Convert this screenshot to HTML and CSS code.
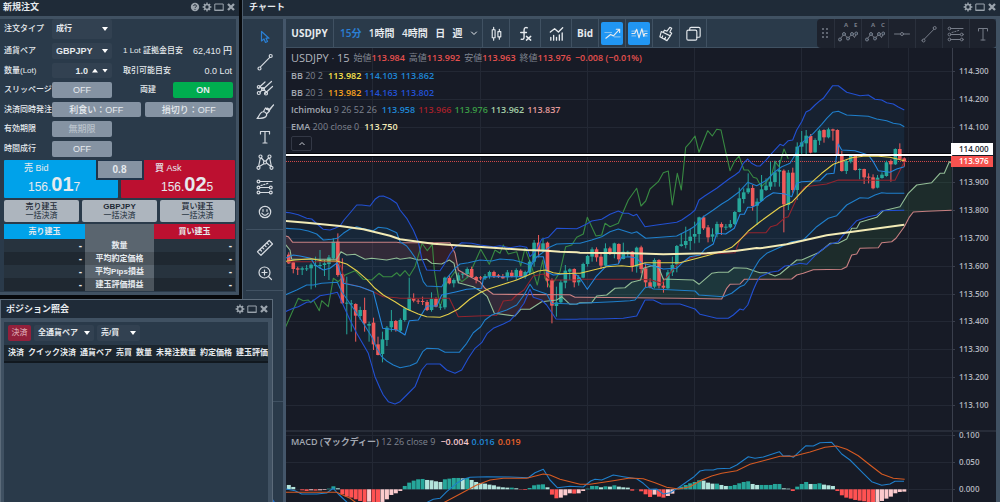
FILE: index.html
```html
<!DOCTYPE html>
<html lang="ja">
<head>
<meta charset="utf-8">
<title>USDJPY チャート</title>
<link rel="stylesheet" href="styles.css">
</head>
<body>
<svg class="sprite" aria-hidden="true">
  <symbol id="i-help" viewBox="0 0 10 10"><circle cx="5" cy="5" r="4.2" fill="currentColor"/><path d="M3.6 4a1.4 1.3 0 1 1 2 1.2q-.6.3-.6.9M5 7.1v.9" fill="none" stroke="#1f2a36" stroke-width="1"/></symbol>
  <symbol id="i-gear" viewBox="0 0 10 10"><circle cx="5" cy="5" r="2.5" fill="none" stroke="currentColor" stroke-width="1.7"/><path d="M5 .6v1.6M5 7.8v1.6M.6 5h1.6M7.8 5h1.6M1.9 1.9l1.1 1.1M7 7l1.1 1.1M8.1 1.9L7 3M3 7L1.900 8.100" stroke="currentColor" stroke-width="1.4"/></symbol>
  <symbol id="i-max" viewBox="0 0 10 10"><path d="M.8 2h8.400v6.300H.8z" fill="none" stroke="currentColor" stroke-width="1"/><path d="M.5 8.300h9" stroke="currentColor" stroke-width="1.200"/></symbol>
  <symbol id="i-close" viewBox="0 0 10 10"><path d="M2 2l6 6M8 2L2 8" stroke="currentColor" stroke-width="2.300"/></symbol>
  <symbol id="i-trend" viewBox="0 0 20 20"><path d="M5.200 15.200L15 5.200M3 16.500a1.500 1.500 0 1 0 3 0a1.500 1.500 0 1 0-3 0M14.200 4a1.500 1.500 0 1 0 3 0a1.500 1.500 0 1 0-3 0"/></symbol>
  <symbol id="i-fib" viewBox="0 0 20 20"><path d="M5 4.500h12M5 10.500h9M5 15.500h9"/><path d="M6 8.500l8-2.500" stroke-dasharray="1.300 1.600"/><circle cx="3.500" cy="4.500" r="1.400"/><circle cx="3.500" cy="10.500" r="1.400"/><circle cx="15.800" cy="10.500" r="1.400"/><circle cx="3.500" cy="15.500" r="1.400"/><circle cx="15.800" cy="15.500" r="1.400"/></symbol>
  <symbol id="i-text" viewBox="0 0 20 20"><path d="M5.500 7V4.500h9V7M10 4.500v11.500M8 16h4"/></symbol>
  <symbol id="i-wave" viewBox="0 0 20 20"><path d="M2.500 14.500L6 10l4 4.500L14 10l2.500 3.500L18.500 9"/><g class="knot"><circle cx="2" cy="15.500" r="1.500"/><circle cx="6" cy="10" r="1.500"/><circle cx="10" cy="14.500" r="1.500"/><circle cx="14" cy="10" r="1.500"/><circle cx="18.300" cy="9.500" r="1.500"/></g></symbol>
</svg>

<main class="desktop">
  <section class="window window-chart">
    <header class="titlebar">
      <h2>チャート</h2>
      <div class="winbtns">
        <button aria-label="設定"><svg><use href="#i-gear"/></svg></button>
        <button aria-label="最大化"><svg><use href="#i-max"/></svg></button>
        <button aria-label="閉じる"><svg><use href="#i-close"/></svg></button>
      </div>
    </header>
    <div class="chart-body">
      <nav class="tools" aria-label="描画ツール">
        <div class="tool-group">
          <button class="active" aria-label="カーソル"><svg viewBox="0 0 20 20"><path d="M6.500 4.500v9.500l2.500-2 1.500 3.500 2-1-1.500-3.300h3z"/></svg></button>
          <button aria-label="トレンドライン"><svg viewBox="0 0 20 20"><use href="#i-trend"/></svg></button>
          <button aria-label="ピッチフォーク"><svg viewBox="0 0 20 20"><path d="M5 15L16.500 4.500M4 10.500L10 5M10 16.500L17.500 9.500M5 9.500l7 6"/><circle cx="3.800" cy="16" r="1.500"/><circle cx="3.800" cy="10" r="1.500"/><circle cx="8" cy="12" r="1.500"/><circle cx="11" cy="16.500" r="1.500"/></svg></button>
          <button aria-label="ブラシ"><svg viewBox="0 0 20 20"><path d="M2 16.500c2-1 2-5 5-6.500 3-1 6 2 4 4.500-2 2-5 2-9 2zM8.500 9.500L10.500 6l4 3-3 3M11.500 7.500c0-2.500 1.500-1 3 0l4-4.500M14 9l4.500-6"/></svg></button>
          <button aria-label="テキスト"><svg viewBox="0 0 20 20"><use href="#i-text"/></svg></button>
          <button aria-label="パターン"><svg viewBox="0 0 20 20"><path d="M3.500 15L5.500 5l4.500 5 4.500-5 2 10-5.500-4.500z"/><g class="knot"><circle cx="3.500" cy="15.800" r="1.500"/><circle cx="5.500" cy="4.500" r="1.500"/><circle cx="10" cy="10.500" r="1.500"/><circle cx="14.500" cy="4.500" r="1.500"/><circle cx="16.500" cy="15.800" r="1.500"/></g></svg></button>
          <button aria-label="フィボナッチ"><svg viewBox="0 0 20 20"><use href="#i-fib"/></svg></button>
          <button aria-label="アイコン"><svg viewBox="0 0 20 20"><circle cx="10" cy="10" r="5.700"/><path d="M6.800 11.200q3.200 4.300 6.400 0M8 7.500v1.800M12 7.500v1.800"/></svg></button>
        </div>
        <div class="tool-group">
          <button aria-label="定規"><svg viewBox="0 0 20 20"><path d="M2.500 13.800L14.200 2.500l3.300 3.500L6 17.300zM5 11.500l1.500 1.500M7.300 9.300l1.500 1.500M9.600 7.100l1.500 1.500M11.900 4.900l1.500 1.500"/></svg></button>
          <button aria-label="ズーム"><svg viewBox="0 0 20 20"><circle cx="9.500" cy="9.500" r="5.500"/><path d="M9.500 7v5M7 9.500h5M13.500 13.500l3 3"/></svg></button>
        </div>
        <div class="tool-group tool-space"></div>
        <div class="tool-dock"><button class="fav" aria-label="お気に入り"><span></span></button></div>
      </nav>

      <div class="chart-main">
        <div class="topbar">
          <button class="symbol">USDJPY</button>
          <div class="intervals">
            <button class="active">15分</button><button>1時間</button><button>4時間</button><button>日</button><button>週</button>
            <button aria-label="時間足メニュー"><svg class="chev" viewBox="0 0 8 8"><path d="M1.500 3L4 5.500 6.500 3"/></svg></button>
          </div>
          <button class="cell" aria-label="ローソク足"><svg viewBox="0 0 20 20"><path d="M5.500 6h3v8.500h-3zM7 3.500V6M7 14.500V17M11.500 8h3v5.500h-3zM13 5.500V8M13 13.500v2.500"/></svg></button>
          <button class="cell wide" aria-label="インジケーター"><svg viewBox="0 0 20 20"><path d="M12 4c-2-1-3.500 0-3.500 2.500V14c0 2-1.500 2.500-3 2M5 9h6M11 13l4.500 4M15.500 13L11 17" stroke-width="1.500"/></svg></button>
          <button class="cell wide" aria-label="テンプレート"><svg viewBox="0 0 20 20"><path d="M3.500 8.500L8 5l4 3.500L16.500 4M4 14v3M7 12v5M10 14v3M13 11.500V17M16 9.500V17" stroke-width="1.400"/></svg></button>
          <button class="cell">Bid</button>
          <span class="cell"><button class="toggle" aria-label="注文ライン"><svg viewBox="0 0 20 20"><path d="M3 15l5-4 3 1.500L17 6M14 5.500h3.500V9"/><path d="M2 9h7M12 13.500h6" opacity=".5"/></svg></button></span>
          <span class="cell"><button class="toggle" aria-label="約定ライン"><svg viewBox="0 0 20 20"><path d="M2 10h3l2-4.500 2.500 9L12.500 5l2 8 1.200-3H18"/><path d="M2 7.500h4M14 7.500h4M2 12.500h4M15 12.500h3" opacity=".5"/></svg></button></span>
          <button class="cell" aria-label="消去"><svg viewBox="0 0 20 20"><path d="M4.500 8l9.500 4.500-3.500 5L3 13.500zM6.500 8.800L8 6.500l2.500 1 3-4 2 1-2 4 2 1.200-1.500 2.500M6 12.500l-.8 2M9 14l-.8 2"/></svg></button>
          <button class="cell" aria-label="レイアウト"><svg viewBox="0 0 20 20"><rect x="3" y="6.500" width="10.500" height="10.500" rx="1.500"/><path d="M6 6.500v-1.500Q6 3.500 7.500 3.500h8Q17 3.500 17 5v7.500q0 1.500-1.500 1.500h-2"/></svg></button>
          <div class="floatbar">
            <span class="grip"></span>
            <button aria-label="エリオット波動"><svg viewBox="0 0 20 20"><use href="#i-wave"/></svg><i>A</i><i>E</i></button>
            <button aria-label="ABC波動"><svg viewBox="0 0 20 20"><use href="#i-wave"/></svg><i>A</i><i>C</i></button>
            <button aria-label="水平線"><svg viewBox="0 0 20 20"><path d="M2.500 10H8M12 10h5.500"/><circle cx="10" cy="10" r="1.500"/></svg></button>
            <button aria-label="ライン"><svg viewBox="0 0 20 20"><use href="#i-trend"/></svg></button>
            <button aria-label="リトレースメント"><svg viewBox="0 0 20 20"><use href="#i-fib"/></svg></button>
            <button aria-label="文字"><svg viewBox="0 0 20 20"><use href="#i-text"/></svg></button>
          </div>
        </div>

        <div class="pane pane-price">
          <svg id="price" viewBox="286 48 710 382" preserveAspectRatio="xMaxYMin slice"></svg>
          <div class="legend">
            <p class="ohlc"><b class="sym">USDJPY <small>·</small> 15</b><span>始値<b class="down">113.984</b></span><span>高値<b class="down">113.992</b></span><span>安値<b class="down">113.963</b></span><span>終値<b class="down">113.976</b></span><b class="down">−0.008 (−0.01%)</b></p>
            <p><span><b>BB</b> 20 2</span><b class="yellow">113.982</b><b class="blue">114.103</b><b class="blue">113.862</b></p>
            <p><span><b>BB</b> 20 3</span><b class="orange">113.982</b><b class="navy">114.163</b><b class="navy">113.802</b></p>
            <p><span><b>Ichimoku</b> 9 26 52 26</span><b class="blue">113.958</b><b class="wine">113.966</b><b class="green">113.976</b><b class="mint">113.962</b><b class="pink">113.837</b></p>
            <p><span><b>EMA</b> 200 close 0</span><b class="cream">113.750</b></p>
            <button class="collapse" aria-label="折りたたむ"><svg class="chev" viewBox="0 0 8 8"><path d="M1.500 5L4 2.500 6.500 5"/></svg></button>
          </div>
        </div>
        <div class="pane pane-macd">
          <svg id="macd" viewBox="286 430 710 72" preserveAspectRatio="xMaxYMin slice"></svg>
          <div class="legend">
            <p><span><b>MACD (マックディー)</b> 12 26 close 9</span><b class="rose">−0.004</b><b class="blue">0.016</b><b class="rust">0.019</b></p>
          </div>
        </div>
      </div>
    </div>
  </section>

  <section class="window window-order">
    <header class="titlebar">
      <h2>新規注文</h2>
      <div class="winbtns">
        <button aria-label="ヘルプ"><svg><use href="#i-help"/></svg></button>
        <button aria-label="設定"><svg><use href="#i-gear"/></svg></button>
        <button aria-label="最大化"><svg><use href="#i-max"/></svg></button>
        <button aria-label="閉じる"><svg><use href="#i-close"/></svg></button>
      </div>
    </header>
    <form class="order">
      <div class="fields">
        <label for="otype">注文タイプ</label>
        <span class="select"><select id="otype"><option>成行</option></select></span>
        <span class="rest"></span>

        <label for="pair">通貨ペア</label>
        <span class="select latin"><select id="pair"><option>GBPJPY</option></select></span>
        <span class="rest"><span>1 Lot 証拠金目安</span><span class="num">62,410 円</span></span>

        <label for="lot">数量(Lot)</label>
        <span class="stepper latin"><input id="lot" type="text" value="1.0"><button type="button" class="up" aria-label="増やす"></button><button type="button" class="dn" aria-label="減らす"></button></span>
        <span class="rest"><span>取引可能目安</span><span class="num">0.0 Lot</span></span>

        <label for="slip">スリッページ</label>
        <button type="button" id="slip" class="btn">OFF</button>
        <span class="rest hedge"><label for="hedge">両建</label><button type="button" id="hedge" class="btn on">ON</button></span>

        <label for="tp">決済同時発注</label>
        <span class="pair-btns"><button type="button" id="tp" class="btn">利食い：OFF</button><button type="button" class="btn">損切り：OFF</button></span>

        <label for="exp">有効期限</label>
        <button type="button" id="exp" class="btn" disabled>無期限</button>
        <span class="rest"></span>

        <label for="timed">時間成行</label>
        <button type="button" id="timed" class="btn">OFF</button>
        <span class="rest"></span>
      </div>

      <div class="quotes">
        <button type="button" class="quote bid"><span class="side">売 Bid</span><span class="px">156.<b>01</b>7</span></button>
        <button type="button" class="quote ask"><span class="side">買 Ask</span><span class="px">156.<b>02</b>5</span></button>
        <span class="spread">0.8</span>
      </div>

      <div class="closers">
        <button type="button"><b>売り建玉</b>一括決済</button>
        <button type="button"><b class="latin">GBPJPY</b>一括決済</button>
        <button type="button"><b>買い建玉</b>一括決済</button>
      </div>

      <table class="summary">
        <thead><tr><th class="sell">売り建玉</th><th></th><th class="buy">買い建玉</th></tr></thead>
        <tbody>
          <tr><td>-</td><th>数量</th><td>-</td></tr>
          <tr><td>-</td><th>平均約定価格</th><td>-</td></tr>
          <tr><td>-</td><th>平均Pips損益</th><td>-</td></tr>
          <tr><td>-</td><th>建玉評価損益</th><td>-</td></tr>
        </tbody>
      </table>
    </form>
  </section>

  <section class="window window-positions">
    <header class="titlebar">
      <h2>ポジション照会</h2>
      <div class="winbtns">
        <button aria-label="設定"><svg><use href="#i-gear"/></svg></button>
        <button aria-label="最大化"><svg><use href="#i-max"/></svg></button>
        <button aria-label="閉じる"><svg><use href="#i-close"/></svg></button>
      </div>
    </header>
    <div class="positions">
      <div class="filters">
        <button class="settle">決済</button>
        <span class="select f-pair"><select aria-label="通貨ペア"><option>全通貨ペア</option></select></span>
        <span class="select f-side"><select aria-label="売買"><option>売/買</option></select></span>
      </div>
      <div class="table-clip">
        <table>
          <thead><tr><th>決済</th><th>クイック決済</th><th>通貨ペア</th><th>売買</th><th>数量</th><th>未発注数量</th><th>約定価格</th><th>建玉評価</th></tr></thead>
        </table>
      </div>
    </div>
  </section>
</main>
<script src="chart.js"></script>
</body>
</html>
```
FILE: styles.css
```css
* { box-sizing: border-box; }
body {
  margin: 0;
  background: #07090c;
  color: #e6eaee;
  font: 500 8px/12px "Liberation Sans", "Noto Sans CJK JP", sans-serif;
}
button, input, select {
  margin: 0;
  padding: 0;
  border: 0;
  background: none;
  color: inherit;
  font: inherit;
  appearance: none;
}
h2, p { margin: 0; }
.sprite { position: absolute; width: 0; height: 0; }

.desktop { position: relative; height: 100vh; overflow: hidden; }
.window { position: absolute; display: flex; flex-direction: column; background: #2a3a4a; }
.window-chart { left: 242px; right: 0; top: 0; bottom: 0; border-left: 1px solid #4c5c6c; }
.window-order { left: 0; top: 0; width: 239px; border: solid #405162; border-width: 0 3px 3px 0; box-shadow: 0 0 0 3px #07090c; }
.window-positions { left: 0; top: 299px; bottom: 0; width: 273px; border: 1px solid #5c6b7a; border-bottom: 0; }

.titlebar {
  display: flex;
  align-items: center;
  justify-content: space-between;
  flex: none;
  height: 19px;
  padding: 0 3px 2px 3px;
  background: #1f2b38;
  border-bottom: 3px solid #405162;
}
.window-order .titlebar { margin-right: -3px; }
.titlebar h2 { font-size: 9px; line-height: 14px; font-weight: 700; }
.window-chart .titlebar { padding-left: 6px; }
.window-positions .titlebar { height: 22px; padding: 0 3px 0 5px; border-bottom-width: 4px; }
.winbtns { display: flex; gap: 2px; color: #9ba4ad; }
.winbtns button { display: flex; }
.winbtns svg { width: 10px; height: 10px; }

/* order form */
.order { padding: 0 1px 1px 4px; }
.fields {
  display: grid;
  grid-template-columns: 48px 60px 1fr;
  grid-template-rows: 20px 16px 15px 16px 15px 16px 16px;
  gap: 4px 0;
  align-items: center;
}
.fields > label { white-space: nowrap; }
.fields > * { align-self: stretch; display: flex; align-items: center; }
.latin { font-size: 9px; font-weight: 700; }
.num { font-size: 9px; }
.select { position: relative; display: flex; background: #324151; border-radius: 2px; font-weight: 700; }
.select select { width: 100%; padding-left: 4px; }
.select::after {
  content: "";
  position: absolute;
  right: 4px;
  top: 50%;
  width: 6px;
  height: 4px;
  margin-top: -2px;
  background: #fff;
  clip-path: polygon(0 0, 100% 0, 50% 100%);
  pointer-events: none;
}
.stepper { background: #324151; gap: 4px; padding-right: 4px; border-radius: 2px; }
.stepper input { width: 100%; min-width: 0; text-align: right; }
.stepper button { flex: none; width: 6px; height: 4px; background: #fff; }
.stepper .up { clip-path: polygon(50% 0, 100% 100%, 0 100%); }
.stepper .dn { clip-path: polygon(0 0, 100% 0, 50% 100%); }
.rest { justify-content: space-between; padding: 0 3px 0 11px; }
.rest.hedge { padding: 0 2px 0 28px; }
.hedge .btn { width: 60px; align-self: stretch; }
.pair-btns { grid-column: 2 / 4; gap: 4px; padding-right: 2px; }
.pair-btns .btn { flex: 1; align-self: stretch; }
.btn {
  justify-content: center;
  background: #8593a3;
  border-radius: 2px;
  font-size: 9px;
  line-height: 12px;
  text-align: center;
}
.btn:disabled { color: #b9c2cb; }
.btn.on { background: #00ad4f; font-weight: 700; }

.quotes { position: relative; display: grid; grid-template-columns: 1fr 1fr; gap: 3px; margin: 3px 0 2px; }
.quote { display: flex; flex-direction: column; height: 38px; border-radius: 1px; padding-top: 2px; text-align: left; }
.bid { background: #00a2ea; padding-left: 20px; }
.ask { background: #bc1030; padding-left: 34px; }
.side { font-size: 9px; line-height: 12px; }
.px { display: flex; align-items: baseline; font-size: 12px; line-height: 20px; margin-left: 4px; }
.ask .px { margin-left: 6px; }
.px b { font-size: 20px; }
.spread {
  position: absolute;
  left: 50%;
  top: 0;
  width: 48px;
  height: 20px;
  margin-left: -24px;
  border: 2px solid #20344a;
  border-top-width: 1px;
  background: #8593a3;
  font-size: 10px;
  font-weight: 700;
  line-height: 17px;
  text-align: center;
}

.closers { display: grid; grid-template-columns: 1fr 1fr 1fr; gap: 3px; margin-bottom: 2px; }
.closers button {
  height: 22px;
  background: #adb5be;
  border-radius: 2px;
  color: #3a4652;
  line-height: 9px;
}
.closers b { display: block; font-weight: 500; font-size: 8px; color: #1f2a36; }
.closers .latin { font-weight: 700; }

.summary { width: 100%; border-collapse: collapse; table-layout: fixed; }
.summary th, .summary td { padding: 0; height: 13px; font-size: 8px; line-height: 13px; font-weight: 700; }
.summary thead th { height: 15px; background: #5d6974; }
.summary th:nth-child(2) { width: 69px; background: #5a656f; }
.summary .sell { background: #00a2ea; }
.summary .buy { background: #bc1030; }
.summary td { text-align: right; padding-right: 3px; background: #27333e; font-size: 10px; }
.summary tr:nth-child(even) td { background: #1f2831; }
.summary tbody tr:nth-child(even) th { background: #4b545c; }

/* positions */
.positions { flex: 1; padding: 3px 0 0 4px; border: solid #405162; border-width: 0 4px 0 3px; }
.filters { display: flex; gap: 3px; padding-left: 0; height: 16px; }
.settle { width: 23px; background: #92203b; color: #d9a0ab; border-radius: 2px; }
.f-pair { width: 60px; }
.f-side { width: 43px; }
.table-clip { overflow: hidden; margin: 4px 0 0 -4px; background: #1c262f; border-bottom: 2px solid #11181f; }
.table-clip table { border-collapse: collapse; }
.table-clip th { padding: 0 0 0 4px; height: 16px; font-size: 8px; font-weight: 700; white-space: nowrap; }

/* chart window */
.chart-body { display: flex; flex: 1; min-height: 0; padding-left: 3px; border-right: 4px solid #405162; }
.tools { display: flex; flex-direction: column; flex: none; width: 40px; overflow: hidden; border-right: 3px solid #44566a; color: #d5dae0; }
.tool-group { display: flex; flex-direction: column; align-items: center; padding: 5px 0; border-bottom: 1px solid #405162; }
.tool-group button { display: flex; align-items: center; justify-content: center; width: 30px; height: 25px; }
.tool-space { flex: none; height: 111px; }
.tool-dock { margin-top: auto; display: flex; justify-content: center; margin-bottom: -16px; }
.fav span { display: block; width: 22px; height: 22px; border-radius: 11px; background: #1e6fd0; }
.tools svg, .topbar svg { width: 20px; height: 20px; fill: none; stroke: currentColor; stroke-width: 1.2; stroke-linecap: round; stroke-linejoin: round; }
.tools .active, .topbar .active { color: #2a7fd4; }
.knot circle { fill: #2a3a4a; }

.chart-main { display: flex; flex-direction: column; flex: 1; min-width: 0; font-family: "Open Sans", "Noto Sans CJK JP", sans-serif; }
.topbar { position: relative; display: flex; flex: none; height: 29px; border-bottom: 1px solid #405162; font-size: 10px; font-weight: 700; }
.symbol { width: 48px; border-right: 1px solid #405162; }
.intervals { display: flex; align-items: center; justify-content: space-between; width: 149px; padding: 0 4px 0 6px; border-right: 1px solid #405162; font-weight: 600; }
.intervals button { display: flex; }
.topbar .chev, .legend .chev { width: 8px; height: 8px; fill: none; stroke: currentColor; stroke-width: 1; }
.cell { display: flex; align-items: center; justify-content: center; width: 27px; border-right: 1px solid #405162; }
.cell.wide { width: 31px; }
.topbar .cell svg { width: 19px; height: 19px; }
.toggle { display: flex; align-items: center; justify-content: center; width: 22px; height: 23px; border-radius: 2px; background: #2196f3; }
.floatbar {
  position: absolute;
  right: 0;
  top: 0;
  display: flex;
  height: 29px;
  border-radius: 4px;
  background: #1d222d;
  color: #767c88;
}
.floatbar button { position: relative; display: flex; align-items: center; justify-content: center; width: 27px; border-left: 1px solid #2a303c; }
.floatbar .knot circle { fill: #1d222d; }
.floatbar svg { stroke-width: 1; }
.floatbar i { position: absolute; top: 2px; left: 9px; font: 700 6px/8px "Open Sans", sans-serif; }
.floatbar i + i { left: 19px; }
.grip { width: 17px; height: 10px; margin: 9px 0; background: radial-gradient(circle at 1px 1px, #5f6571 1px, transparent 1px) 5px 0 / 4px 4px repeat; clip-path: inset(0 4px 0 5px); }

.pane { position: relative; overflow: hidden; background: #171b26; }
.pane-price { flex: 1; min-height: 0; }
.pane-macd { flex: none; height: 72px; }
.pane > svg { display: block; width: 100%; height: 100%; }
.legend { position: absolute; left: 5px; top: 2px; display: flex; flex-direction: column; gap: 1px; color: #7f8490; font-size: 9px; }
.legend p { display: flex; align-items: center; gap: 3px; height: 16px; white-space: nowrap; font-weight: 400; }
.legend b { font-weight: 600; }
.legend p > span:first-child { margin-right: 2px; }
.legend span > b:first-child { color: #a3a8b2; }
.legend .sym { font-size: 11px; font-weight: 400; color: #b2b5be; }
.legend .ohlc { gap: 4px; margin-bottom: 1px; }
.legend .ohlc b.down { color: #e5504e; }
.pane-macd .legend { top: 4px; }
.collapse { display: flex; align-items: center; justify-content: center; width: 21px; height: 15px; border: 1px solid #333845; border-radius: 2px; color: #c9ccd3; }
.legend .yellow { color: #fbe34d; }
.legend .orange { color: #f7a21f; }
.legend .blue { color: #1f87d6; }
.legend .navy { color: #2252d6; }
.legend .wine { color: #a3202a; }
.legend .green { color: #3a9a45; }
.legend .mint { color: #a5cfa8; }
.legend .pink { color: #e39a9a; }
.legend .cream { color: #f2ebb8; }
.legend .rose { color: #f3c6cb; }
.legend .rust { color: #e8622a; }

/* plot */
.grid { stroke: #232834; stroke-width: 1; }
.divider { fill: #272c38; }
.line { fill: none; stroke-width: 1.1; stroke-linejoin: round; }
.l-bb3 { stroke: #2250d2; }
.l-bb2 { stroke: #1f7fcb; }
.l-mid { stroke: #e5cf4a; }
.l-ema { stroke: #f3ebb6; stroke-width: 2; }
.l-chikou { stroke: #388a42; }
.l-tenkan { stroke: #2386dd; }
.l-kijun { stroke: #92242e; }
.l-spana { stroke: #93bd96; }
.l-spanb { stroke: #c98082; }
.l-macd { stroke: #1f7fcb; }
.l-signal { stroke: #d55a22; }
.f-bb { fill: #2196f3; fill-opacity: .05; }
.f-bear { fill: #f44336; fill-opacity: .12; }
.f-bull { fill: #4caf50; fill-opacity: .12; }
.c-up { fill: #26a69a; }
.c-down { fill: #ef5a5a; }
.h-up { fill: #26a69a; }
.h-upfade { fill: #b2e4dc; }
.h-down { fill: #ff5252; }
.h-downfade { fill: #fccbcd; }
.level-edge { stroke: #05070b; stroke-width: 4; }
.level { stroke: #fff; stroke-width: 2; }
.last { stroke: #d04848; stroke-width: 1; stroke-dasharray: 1 1; }
.axis-bg { fill: #171b26; }
.axis-line { stroke: #3a3f4c; stroke-width: 1; }
.tick { fill: #b2b5be; font: 600 8px "Open Sans", sans-serif; }
.tag-level { fill: #fff; }
.tag-last { fill: #f7524f; }
.tick.on-level { fill: #20242e; }
.tick.on-last { fill: #fff; }
```
FILE: chart.js
```js
const NS = 'http://www.w3.org/2000/svg';
const STEP = 4.46;
const FIRST = 288.8;

function add(parent, tag, attrs, text) {
  const el = document.createElementNS(NS, tag);
  for (const key in attrs) el.setAttribute(key, attrs[key]);
  if (text) el.textContent = text;
  parent.appendChild(el);
  return el;
}

// Series are stored in sections; each has an origin, and its points are in thirds of a unit.
const ORIGIN = { A: [240, 150], B: [400, 200], C: [580, 120], D: [760, 70], E: [270, 420], F: [630, 420] };

function points(sections) {
  const out = [];
  for (const key in sections) {
    const [ox, oy] = ORIGIN[key];
    for (const pair of sections[key].split(' ')) {
      const [x, y] = pair.split(',').map(Number);
      out.push([(ox + x / 3).toFixed(1), (oy + y / 3).toFixed(1)]);
    }
  }
  return out;
}
const join = pts => pts.map(p => p.join(',')).join(' ');
const line = (svg, pts, name) => add(svg, 'polyline', { points: join(pts), class: 'line ' + name });
const band = (svg, a, b, name, clip) =>
  add(svg, 'polygon', Object.assign({ points: join(a.concat([...b].reverse())), class: name }, clip ? { 'clip-path': `url(#${clip})` } : {}));

const series = {
  bb3u: {
    A: '136,187 150,188 175,194 200,205 215,207 235,225 250,238 270,240 285,235 300,228 312,210 325,195 350,165 365,165 390,168 405,148 418,139 430,138 450,146 470,160',
    B: '0,30 20,55 40,90 55,125 65,175 80,210 120,212 135,190 150,162 165,142 185,128 215,130 240,135 280,140 300,137 330,143 360,138 380,142 390,170 400,160 412,145 425,118 445,112 470,85 530,86',
    C: '0,322 20,312 35,303 65,298 90,283 115,273 130,280 145,280 160,287 170,283 195,320 230,315 290,307 305,300 330,283 345,270 357,240 375,227 410,205 430,190 450,175 465,165 478,155 490,130 503,117 515,130 530,138',
    D: '0,288 20,268 35,250 60,223 70,227 85,212 98,210 110,180 125,155 138,126 150,120 165,105 180,92 190,85 218,47 235,47 260,67 300,77 325,75 345,88 365,90 380,98 400,102 415,111 433,120'
  },
  bb3l: {
    A: '136,485 160,475 175,470 200,457 215,455 240,437 270,432 292,427 305,455 330,510 350,550 385,610 405,680 420,715 430,735 445,755 465,762',
    B: '0,605 20,585 45,560 65,510 80,492 120,492 140,510 165,520 185,510 205,475 225,445 245,428 262,400 280,385 310,372 330,362 350,340 372,310 390,268 400,292 425,300 440,315 468,357 500,358 530,358',
    C: '0,597 60,597 130,595 170,588 195,540 220,540 245,552 300,552 345,567 360,583 410,595 445,595 460,585 480,567 490,570 503,555 520,510 530,487',
    D: '0,620 30,607 55,603 75,588 100,585 120,580 140,583 165,557 185,540 210,523 235,515 250,495 265,480 290,452 325,440 350,435 365,422 433,421'
  },
  bb2u: {
    A: '136,235 180,238 205,243 230,252 250,270 275,268 292,265 310,250 330,237 350,230 365,235 400,242 415,232 440,235 470,248',
    B: '0,125 20,138 35,158 50,180 60,215 70,245 80,258 125,260 140,235 165,205 180,192 205,188 240,180 275,183 300,177 340,180 365,187 390,195 405,175 425,160 445,143 470,132 530,130',
    C: '0,370 35,360 65,350 90,335 115,327 155,340 170,335 197,355 240,352 290,348 330,328 345,318 370,290 400,270 425,252 445,240 478,215 503,187 530,197',
    D: '0,342 20,330 45,305 65,290 90,280 105,255 115,232 130,215 160,190 185,163 200,145 218,127 235,124 260,135 325,139 350,147 380,152 400,160 420,163 433,170'
  },
  bb2l: {
    A: '136,435 170,420 200,405 220,405 245,400 292,397 305,425 340,475 370,520 395,560 410,595 425,620 440,633 460,645 475,651',
    B: '0,503 30,497 50,488 68,455 80,445 115,446 135,457 178,457 200,430 220,398 242,380 255,360 275,345 320,330 350,315 372,285 390,253 400,268 420,275 440,282 455,310 500,311 530,313',
    C: '0,550 100,545 150,542 165,540 195,503 210,500 220,507 345,513 357,525 430,530 455,520 480,500 493,495 505,480 520,450 535,425',
    D: '0,568 20,550 60,532 95,515 130,510 150,490 170,470 205,445 230,437 260,405 300,383 325,385 345,375 365,368 380,370 433,370'
  },
  mid: {
    A: '136,334 165,330 215,326 245,332 290,333 320,342 350,362 380,388 405,415 430,435 465,455',
    B: '0,315 20,327 55,342 80,350 120,352 145,343 175,327 210,297 240,278 265,267 310,253 350,240 390,223 415,213 437,210 460,218 480,221 530,220',
    C: '0,460 40,450 80,440 125,437 155,440 195,428 300,428 340,418 380,407 430,393 455,382 480,360 505,333',
    D: '0,455 60,412 95,397 140,350 185,310 220,283 250,272 275,263 310,259 355,259 390,262 433,272'
  },
  ema: {
    A: '136,213 200,218 300,228 370,238 450,257',
    B: '0,118 100,131 200,138 300,145 380,150 440,152 480,155 530,157',
    C: '0,398 160,400 250,403 380,400 470,392 530,384',
    D: '0,535 80,523 200,496 300,482 433,464'
  },
  chikou: {
    A: '136,533 175,445 190,452 205,450 212,458 220,450 238,482 245,452 265,470 280,385 295,395 315,375 345,362 370,388 395,390 417,370 430,380 455,380 470,368',
    B: '0,228 15,212 28,228 45,200 66,130 82,152 97,133 103,210 115,290 120,322 130,290 140,250 165,215 185,245 205,230 242,148 268,193 285,150 300,160 310,135 325,162 350,155 362,198 375,145 390,185 412,255 428,180 435,235 450,262 465,240 480,215 497,140 515,135 530,112',
    C: '10,342 22,292 48,348 65,345 75,310 90,320 115,310 145,240 170,205 183,258 197,243 210,207 235,185 250,158 265,153 277,255 292,160 304,210 317,82 330,68 345,48 357,97 383,32 397,48 410,28 423,30 437,95 450,152 463,125 477,108 492,150 505,150 520,172 530,175',
    D: '4,350 20,335 35,315 45,275 57,290 72,237 85,267'
  },
  tenkan: {
    A: '136,325 160,315 180,318 212,325 225,345 250,360 270,355 292,338 310,400 360,410 400,425 428,535 470,540',
    B: '0,395 15,405 28,362 55,360 80,318 110,318 125,285 170,275 200,268 245,265 250,235 265,230 375,230 395,195 410,170 430,170 440,215 460,225 520,220 530,225',
    C: '0,475 8,487 22,508 48,470 80,437 115,432 125,412 150,410 170,415 185,430 210,435 250,447 290,445 305,430 330,410 360,405 375,387 400,372 410,340 437,342 463,325 480,283 493,283 503,262 515,262 530,255',
    D: '0,397 20,380 40,368 75,372 95,380 110,340 125,335 180,332 200,312 222,310 235,222 245,240 285,242 325,255 340,275 355,302 390,307 410,297 433,290'
  },
  kijun: {
    A: '136,335 292,335 303,350 317,400 360,410 400,425 430,440 470,443',
    B: '0,295 148,295 175,350 290,346 310,303 335,300 350,285 372,270 400,228 430,222 450,240 530,240',
    C: '0,478 180,478 215,480 245,490 270,460 290,435 330,415 365,403 465,398 480,358 505,338 530,338',
    D: '0,488 18,488 32,470 50,465 75,443 85,440 115,375 135,350 200,342 235,330 405,331 433,275'
  },
  spana: {
    A: '136,283 150,300 155,328 290,328 303,305 320,315 345,313 375,328 395,325 440,330 470,324',
    B: '0,178 30,173 55,180 80,178 95,190 125,192 148,180 162,190 175,248 220,260 245,275 262,290 283,340 345,348 362,328 390,328 425,305 470,300 485,290 510,313 530,312',
    C: '0,548 35,548 50,528 80,525 105,505 135,503 155,487 182,480 190,445 215,437 235,440 250,477 340,480 357,493 395,460 415,457 445,457 462,443 500,445 530,455',
    D: '0,608 20,608 45,618 60,612 110,570 125,570 175,548 190,537 210,520 235,520 260,507 275,475 290,475 300,457 350,442 370,422 420,410 445,370 470,345 515,338 540,310 553,310 568,275 575,280'
  },
  spanb: {
    A: '136,258 145,260 158,277 470,277',
    B: '0,128 150,128 165,160 175,210 200,225 240,245 255,265 280,283 510,284 525,292 530,292',
    C: '0,532 160,533 300,535 425,537 440,505 450,493 480,492 493,478 530,478',
    D: '0,628 95,627 110,615 130,610 160,599 245,598 260,590 275,555 290,552 300,535 355,533 365,518 395,515 408,505 433,470 447,443 460,426 500,424 575,421'
  },
  macd: {
    E: '48,207 75,212 95,222 140,222 170,219 190,205 205,222 230,246 300,300 400,300 475,245 490,238 510,235 530,215 560,190 580,178 600,172 650,170 720,171 775,173 795,158 820,148 840,180 862,203 900,199 940,201 962,183 975,178 995,180 1030,165 1060,170',
    F: '0,173 20,176 40,190 60,208 80,207 100,222 120,218 145,203 190,172 210,153 225,150 250,150 262,146 300,145 320,135 355,110 375,115 400,111 448,95 460,108 478,107 490,112 505,98 528,77 550,78 570,68 605,67 615,78 635,102 660,120 700,160 725,185 755,196 780,192 795,184 822,184'
  },
  signal: {
    E: '48,217 110,217 200,217 240,235 255,246 330,300 430,300 525,246 570,222 620,195 660,180 700,175 770,175 820,162 840,165 870,178 930,193 960,193 1030,182',
    F: '0,174 40,176 75,188 110,202 145,207 180,200 215,180 245,168 275,160 320,152 360,133 400,122 450,109 490,109 540,96 585,82 620,78 650,88 685,107 720,135 755,162 790,175 824,178'
  }
};

// high, body top, body bottom, low; a leading "-" marks a falling candle
const candles = {
  A: '-307,314,340,342 -337,337,357,370 -350,355,359,375 350,355,359,375 345,355,358,363 340,344,355,418 320,345,347,412 300,345,347,357 330,340,345,378 315,322,342,390 265,275,325,328 -250,275,375,380 -325,372,460,462 380,458,460,553 450,460,462,545 -460,462,497,575 470,480,498,510 -443,480,520,545 515,522,527,575 -503,518,583,600 -560,583,615,616 545,568,612,637 528,533,570,588 480,513,532,545 -510,513,540,545 505,510,542,548 475,475,510,515 383,443,480,482',
  B: '-280,295,302,307 -297,302,304,312 -290,303,305,315 -300,306,330,333 277,297,330,335 -292,297,320,322 312,320,322,330 230,233,322,328 -226,234,250,253 235,240,250,262 218,226,242,250 215,221,224,235 202,207,222,232 -200,207,231,232 -228,231,240,250 -228,232,234,240 222,228,235,240 212,216,228,236 -212,216,228,234 -222,226,231,234 -222,229,235,236 210,217,232,242 -210,218,230,232 205,210,230,240 -208,212,230,232 212,216,230,236 180,185,218,222 120,128,185,200 -105,128,153,172 113,130,150,155 -125,128,242,262 -235,240,317,370 260,307,318,350 240,247,307,312 195,212,248,265 205,208,215,240 -205,207,247,262 225,232,247,257',
  C: '428,432,473,475 405,408,432,440 382,388,410,425 -382,388,412,425 -400,410,437,447 370,385,437,438 -380,385,397,405 368,370,400,415 -370,372,418,430 368,395,417,418 392,395,397,410 -393,395,440,455 380,383,440,458 -377,382,447,460 -430,445,487,502 -475,487,502,505 415,420,500,505 -418,420,497,505 -475,497,503,518 450,457,505,507 410,435,457,468 375,378,433,457 340,373,378,380 320,363,375,385 325,350,363,390 305,342,350,370 290,292,342,368 -287,292,325,330 -315,322,352,367 325,343,350,365 305,312,343,352 -307,312,322,345 312,320,322,330 300,312,322,325 273,276,312,315 203,235,276,277 205,217,237,250 160,205,217,222 -195,204,258,272 235,245,257,315 165,208,243,245 175,197,210,213 125,185,200,210 122,157,186,200',
  D: '270,300,305,350 -298,302,403,487 300,308,405,420 -293,308,360,368 217,230,360,390 183,217,230,255 180,197,220,255 -192,198,248,250 205,210,247,248 178,182,212,225 -178,180,202,218 173,178,202,205 -176,178,182,212 -178,180,255,258 -243,255,303,305 270,273,303,312 252,257,275,280 -255,257,300,302 295,297,300,328 -296,297,322,342 -310,320,323,340 -313,322,355,358 315,323,353,355 307,314,324,326 272,277,318,320 -268,273,283,335 235,237,283,285 -220,237,267,270 -262,265,275,290'
};

const histogram = [13, 7, 0, -3, -5, -3, -4, -3, -2, 2, 9, 3, -15, -22, -25, -30, -35, -40, -37, -50, -51, -38, -30, -17, -12, -5, 10, 20, 26, 30, 31, 28, 27, 24, 22, 30, 32, 34, 34, 33, 34, 28, 22, 19, 17, 14, 12, 8, 6, 5, 5, 3, -1, -2, 4, 12, 14, 15, 6, -16, -27, -25, -18, -12, -13, -12, -5, 2, 10, 10, 6, 9, 8, 12, 8, 6, 5, -4, 0, -6, -15, -23, -16, -22, -25, -20, -13, 3, 8, 13, 18, 22, 27, 26, 20, 17, 17, 13, 10, 10, 13, 18, 22, 24, 16, 13, 13, 13, 13, 16, 16, 3, 2, -5, 8, 16, 22, 16, 16, 18, 14, 12, 10, -5, -18, -25, -28, -32, -34, -36, -38, -39, -38, -35, -28, -22, -12, -8, -7];

const gridX = [372.5, 480.5, 587.5, 694.5, 801.5, 908.5];

function drawPrice() {
  const svg = document.getElementById('price');
  const p = {};
  for (const key in series) p[key] = points(series[key]);

  const defs = add(svg, 'defs', {});
  add(add(defs, 'clipPath', { id: 'bear' }), 'rect', { x: 286, y: 48, width: 305, height: 382 });
  add(add(defs, 'clipPath', { id: 'bull' }), 'rect', { x: 591, y: 48, width: 361, height: 382 });

  const rowY = i => 71 + i * 27.83;
  for (const x of gridX) add(svg, 'path', { d: `M${x} 48V430`, class: 'grid' });
  for (let i = 0; i < 13; i++) add(svg, 'path', { d: `M286 ${Math.round(rowY(i)) + 0.5}H952`, class: 'grid' });

  band(svg, p.bb3u, p.bb3l, 'f-bb');
  band(svg, p.bb2u, p.bb2l, 'f-bb');
  band(svg, p.spana, p.spanb, 'f-bear', 'bear');
  band(svg, p.spana, p.spanb, 'f-bull', 'bull');
  add(svg, 'path', { d: 'M286 155H952', class: 'level-edge' });
  add(svg, 'path', { d: 'M286 161.500H952', class: 'last' });
  line(svg, p.chikou, 'l-chikou');

  let index = 0;
  for (const key in candles) {
    const oy = ORIGIN[key][1];
    for (const row of candles[key].split(' ')) {
      const name = row[0] === '-' ? 'c-down' : 'c-up';
      const [high, top, bottom, low] = row.replace('-', '').split(',').map(v => oy + v / 3);
      const x = FIRST + index++ * STEP;
      add(svg, 'rect', { x: x - 0.5, y: high, width: 1, height: low - high, class: name });
      add(svg, 'rect', { x: x - 1.8, y: top, width: 3.6, height: Math.max(1, bottom - top), class: name });
    }
  }

  line(svg, p.kijun, 'l-kijun');
  line(svg, p.spanb, 'l-spanb');
  line(svg, p.spana, 'l-spana');
  line(svg, p.tenkan, 'l-tenkan');
  line(svg, p.bb3u, 'l-bb3');
  line(svg, p.bb3l, 'l-bb3');
  line(svg, p.bb2u, 'l-bb2');
  line(svg, p.bb2l, 'l-bb2');
  add(svg, 'path', { d: 'M286 155H952', class: 'level' });
  line(svg, p.mid, 'l-mid');
  line(svg, p.ema, 'l-ema');

  add(svg, 'rect', { x: 952, y: 48, width: 44, height: 382, class: 'axis-bg' });
  add(svg, 'path', { d: 'M952.5 48V430', class: 'axis-line' });
  for (let i = 0; i < 13; i++) {
    if (i === 3) continue;
    add(svg, 'path', { d: `M952 ${Math.round(rowY(i)) + 0.5}h3`, class: 'axis-line' });
    add(svg, 'text', { x: 959, y: Math.round(rowY(i)) + 3, class: 'tick' }, (114.3 - i / 10).toFixed(3));
  }
  add(svg, 'rect', { x: 951, y: 143, width: 42, height: 12, class: 'tag-level' });
  add(svg, 'text', { x: 959, y: 152, class: 'tick on-level' }, '114.000');
  add(svg, 'rect', { x: 951, y: 156, width: 42, height: 11, class: 'tag-last' });
  add(svg, 'text', { x: 959, y: 164, class: 'tick on-last' }, '113.976');
}

function drawMacd() {
  const svg = document.getElementById('macd');
  for (const x of gridX) add(svg, 'path', { d: `M${x} 430V502`, class: 'grid' });
  for (const y of [435.5, 462.5, 489.5]) add(svg, 'path', { d: `M286 ${y}H952`, class: 'grid' });
  histogram.forEach((v, i) => {
    const prev = i ? histogram[i - 1] : 20;
    const name = v >= 0 ? (v >= prev ? 'h-up' : 'h-upfade') : (v < prev ? 'h-down' : 'h-downfade');
    const h = Math.abs(v) / 3;
    add(svg, 'rect', { x: FIRST - 2 + i * STEP, y: v >= 0 ? 489.3 - h : 489.3, width: 4, height: h, class: name });
  });
  line(svg, points(series.macd), 'l-macd');
  line(svg, points(series.signal), 'l-signal');
  add(svg, 'path', { d: 'M952.5 430V502', class: 'axis-line' });
  add(svg, 'rect', { x: 286, y: 430, width: 710, height: 2, class: 'divider' });
  [['0.100', 438], ['0.050', 465], ['0.000', 492]].forEach(([label, y]) => {
    add(svg, 'path', { d: `M952 ${y - 2.5}h3`, class: 'axis-line' });
    add(svg, 'text', { x: 959, y, class: 'tick' }, label);
  });
}

drawPrice();
drawMacd();
```
